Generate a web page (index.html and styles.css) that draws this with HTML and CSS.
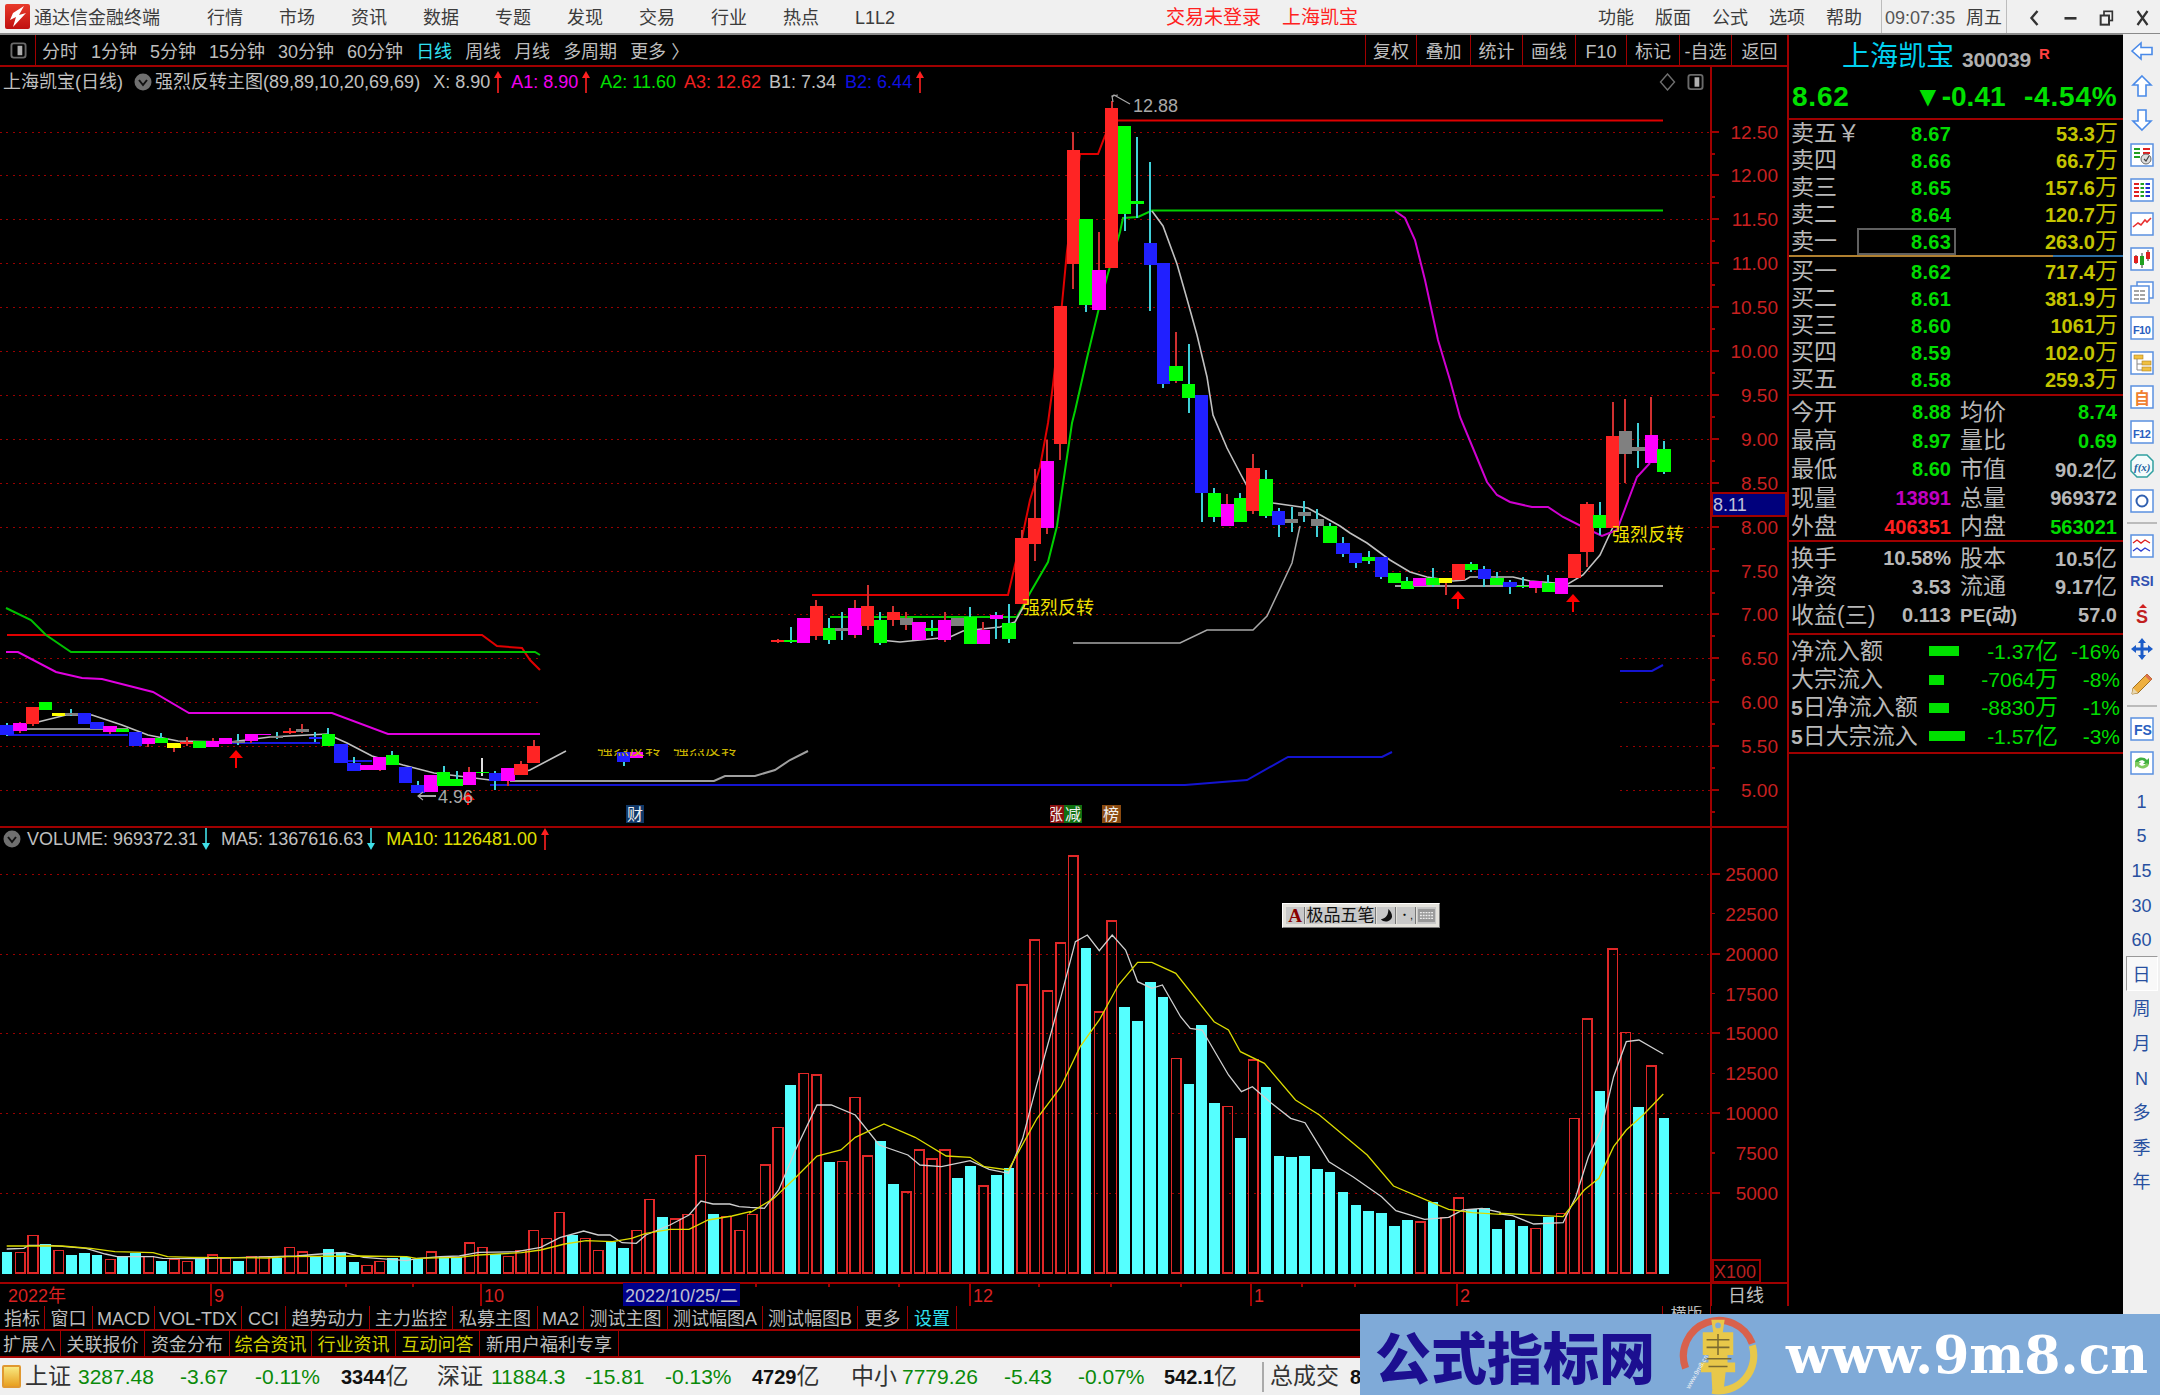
FILE: index.html
```html
<!DOCTYPE html>
<html lang="zh-CN">
<head>
<meta charset="utf-8">
<title>通达信金融终端</title>
<link rel="stylesheet" href="styles.css">
</head>
<body>
<div class="app">
  <header class="titlebar">
    <svg class="logo" viewBox="0 0 25 25"><defs><linearGradient id="lg" x1="0" y1="0" x2="0" y2="1"><stop offset="0" stop-color="#e83a2a"/><stop offset="1" stop-color="#c01010"/></linearGradient></defs><rect width="25" height="25" rx="2" fill="url(#lg)"/><path d="M19 2 L8 9 L5 16 L11 13 L8 23 L21 9 L14 11 Z" fill="#fff"/></svg>
    <span class="brand">通达信金融终端</span>
    <nav class="menu">
      <span>行情</span><span>市场</span><span>资讯</span><span>数据</span><span>专题</span><span>发现</span><span>交易</span><span>行业</span><span>热点</span><span>L1L2</span>
    </nav>
    <div class="notice"><span>交易未登录</span><span>上海凯宝</span></div>
    <nav class="menu-right"><span>功能</span><span>版面</span><span>公式</span><span>选项</span><span>帮助</span></nav>
    <div class="clock"><span class="time">09:07:35</span><span>周五</span></div>
    <div class="winctl">
      <svg viewBox="0 0 14 20"><path d="M10 3 L4 10 L10 17" fill="none" stroke="#333" stroke-width="2.4"/></svg>
      <svg viewBox="0 0 14 20"><rect x="1" y="9" width="12" height="2.6" fill="#333"/></svg>
      <svg viewBox="0 0 18 20"><rect x="6" y="2" width="10" height="11" fill="none" stroke="#333" stroke-width="2"/><rect x="2" y="7" width="10" height="11" fill="#f0f0f0" stroke="#333" stroke-width="2.4"/></svg>
      <svg viewBox="0 0 14 20"><path d="M2 3 L12 17 M12 3 L2 17" stroke="#333" stroke-width="2.2"/></svg>
    </div>
  </header>

  <div class="workspace">
    <div class="chart-col">
      <div class="toolbar">
        <div class="tool-toggle"><svg viewBox="0 0 18 18"><rect x="1.5" y="1.5" width="15" height="15" rx="2.5" fill="none" stroke="#6a6a6a" stroke-width="2"/><rect x="8" y="4" width="5" height="10" fill="#b0b0b0"/></svg></div>
        <div class="periods">
          <span>分时</span><span>1分钟</span><span>5分钟</span><span>15分钟</span><span>30分钟</span><span>60分钟</span><span class="on">日线</span><span>周线</span><span>月线</span><span>多周期</span><span>更多 〉</span>
        </div>
        <div class="tools">
          <span>复权</span><span>叠加</span><span>统计</span><span>画线</span><span>F10</span><span>标记</span><span>-自选</span><span>返回</span>
        </div>
      </div>

      <div class="chart-wrap">
        <svg id="chart" class="chart" viewBox="0 67 1787 1239" xmlns="http://www.w3.org/2000/svg"></svg>

        <div class="legend legend-main">
          <span class="l-name">上海凯宝(日线)</span>
          <svg class="chev" viewBox="0 0 18 18"><circle cx="9" cy="9" r="8.5" fill="#707070"/><path d="M5 7 L9 12 L13 7" fill="none" stroke="#111" stroke-width="2"/></svg>
          <span class="l-formula">强烈反转主图(89,89,10,20,69,69)</span>
          <span class="l-x">X: 8.90</span>
          <svg class="mark" viewBox="0 0 10 22"><path d="M5 22 V4" stroke="#ff2020" stroke-width="1.6"/><path d="M1 7 L5 0 L9 7 Z" fill="#ff2020"/></svg>
          <span class="c-mag l-a1">A1: 8.90</span>
          <svg class="mark" viewBox="0 0 10 22"><path d="M5 22 V4" stroke="#ff2020" stroke-width="1.6"/><path d="M1 7 L5 0 L9 7 Z" fill="#ff2020"/></svg>
          <span class="c-grn l-a2">A2: 11.60</span>
          <span class="c-red">A3: 12.62</span>
          <span class="c-gry">B1: 7.34</span>
          <span class="c-blu">B2: 6.44</span>
          <svg class="mark" viewBox="0 0 10 22"><path d="M5 22 V4" stroke="#ff2020" stroke-width="1.6"/><path d="M1 7 L5 0 L9 7 Z" fill="#ff2020"/></svg>
        </div>
        <div class="legend-tools">
          <svg viewBox="0 0 16 18"><path d="M8 1 L15 9 L8 17 L1 9 Z" fill="none" stroke="#707070" stroke-width="1.4"/></svg>
          <svg viewBox="0 0 18 18"><rect x="1.5" y="1.5" width="15" height="15" rx="2.5" fill="none" stroke="#6a6a6a" stroke-width="2"/><rect x="8" y="4" width="5" height="10" fill="#b0b0b0"/></svg>
        </div>

        <div class="legend legend-vol">
          <svg class="chev" viewBox="0 0 18 18"><circle cx="9" cy="9" r="8.5" fill="#707070"/><path d="M5 7 L9 12 L13 7" fill="none" stroke="#111" stroke-width="2"/></svg>
          <span class="c-gry">VOLUME: 969372.31</span>
          <svg class="mark" viewBox="0 0 10 22"><path d="M5 0 V18" stroke="#40e0e8" stroke-width="1.6"/><path d="M1 15 L5 22 L9 15 Z" fill="#40e0e8"/></svg>
          <span class="c-gry">MA5: 1367616.63</span>
          <svg class="mark" viewBox="0 0 10 22"><path d="M5 0 V18" stroke="#40e0e8" stroke-width="1.6"/><path d="M1 15 L5 22 L9 15 Z" fill="#40e0e8"/></svg>
          <span class="c-yel">MA10: 1126481.00</span>
          <svg class="mark" viewBox="0 0 10 22"><path d="M5 22 V4" stroke="#ff2020" stroke-width="1.6"/><path d="M1 7 L5 0 L9 7 Z" fill="#ff2020"/></svg>
        </div>

        <div class="ime">
          <span class="ime-a">A</span><span class="ime-name">极品五笔</span>
          <span class="ime-btn"><svg viewBox="0 0 14 16"><path d="M9 1 C9 7 7 11 1 12 C4 16 12 15 13 9 C13 6 11 3 9 1Z" fill="#111"/></svg></span>
          <span class="ime-btn ime-dots">・,</span>
          <span class="ime-btn ime-kbd"><svg viewBox="0 0 18 16"><rect x="0" y="1" width="18" height="14" fill="#999"/><path d="M2 5 H16 M2 8 H16 M2 11 H16" stroke="#eee" stroke-width="1.4" stroke-dasharray="2 1"/></svg></span>
        </div>
      </div>

      <div class="tabs tabs-a">
        <span>指标</span><span>窗口</span><span>MACD</span><span>VOL-TDX</span><span>CCI</span><span>趋势动力</span><span>主力监控</span><span>私募主图</span><span>MA2</span><span>测试主图</span><span>测试幅图A</span><span>测试幅图B</span><span>更多</span><span class="t-cyan">设置</span><i class="tab-fill"></i><span class="t-clip">横版</span>
      </div>
      <div class="tabs tabs-b">
        <span>扩展∧</span><span>关联报价</span><span>资金分布</span><span class="t-yel">综合资讯</span><span class="t-yel">行业资讯</span><span class="t-yel">互动问答</span><span>新用户福利专享</span>
      </div>
    </div>

    <section class="quote">
      <div class="q-name"><span class="q-title">上海凯宝</span><span class="q-code">300039</span><sup class="q-r">R</sup></div>
      <div class="q-price"><span class="q-now">8.62</span><span class="q-chg">▼-0.41</span><span class="q-pct">-4.54%</span></div>

      <div class="book book-sell">
        <div class="book-row"><b>卖五￥</b><em>8.67</em><u>53.3<i>万</i></u></div>
        <div class="book-row"><b>卖四</b><em>8.66</em><u>66.7<i>万</i></u></div>
        <div class="book-row"><b>卖三</b><em>8.65</em><u>157.6<i>万</i></u></div>
        <div class="book-row"><b>卖二</b><em>8.64</em><u>120.7<i>万</i></u></div>
        <div class="book-row"><b>卖一</b><em class="boxed">8.63</em><u>263.0<i>万</i></u></div>
      </div>
      <div class="book book-buy">
        <div class="book-row"><b>买一</b><em>8.62</em><u>717.4<i>万</i></u></div>
        <div class="book-row"><b>买二</b><em>8.61</em><u>381.9<i>万</i></u></div>
        <div class="book-row"><b>买三</b><em>8.60</em><u>1061<i>万</i></u></div>
        <div class="book-row"><b>买四</b><em>8.59</em><u>102.0<i>万</i></u></div>
        <div class="book-row"><b>买五</b><em>8.58</em><u>259.3<i>万</i></u></div>
      </div>

      <div class="stats stats-a">
        <div class="stat"><b>今开</b><em class="v-g">8.88</em><b>均价</b><em class="v-g">8.74</em></div>
        <div class="stat"><b>最高</b><em class="v-g">8.97</em><b>量比</b><em class="v-g">0.69</em></div>
        <div class="stat"><b>最低</b><em class="v-g">8.60</em><b>市值</b><em>90.2<i>亿</i></em></div>
        <div class="stat"><b>现量</b><em class="v-m">13891</em><b>总量</b><em>969372</em></div>
        <div class="stat"><b>外盘</b><em class="v-r">406351</em><b>内盘</b><em class="v-g">563021</em></div>
      </div>
      <div class="stats stats-b">
        <div class="stat"><b>换手</b><em>10.58%</em><b>股本</b><em>10.5<i>亿</i></em></div>
        <div class="stat"><b>净资</b><em>3.53</em><b>流通</b><em>9.17<i>亿</i></em></div>
        <div class="stat"><b>收益(三)</b><em>0.113</em><b class="pe">PE(动)</b><em>57.0</em></div>
      </div>
      <div class="funds">
        <div class="fund"><b>净流入额</b><span class="bar bar-30"></span><em>-1.37<i>亿</i></em><em>-16%</em></div>
        <div class="fund"><b>大宗流入</b><span class="bar bar-15"></span><em>-7064<i>万</i></em><em>-8%</em></div>
        <div class="fund"><b><strong>5</strong>日净流入额</b><span class="bar bar-20"></span><em>-8830<i>万</i></em><em>-1%</em></div>
        <div class="fund"><b><strong>5</strong>日大宗流入</b><span class="bar bar-36"></span><em>-1.57<i>亿</i></em><em>-3%</em></div>
      </div>
    </section>

    <aside class="sidebar">
      <div class="ico"><svg viewBox="0 0 24 24"><path d="M2 12 L11 4 V8.5 H22 V15.5 H11 V20 Z" fill="#fff" stroke="#4a8ae8" stroke-width="1.6"/></svg></div>
      <div class="ico"><svg viewBox="0 0 24 24"><path d="M12 2 L21 11 H16 V22 H8 V11 H3 Z" fill="#fff" stroke="#4a8ae8" stroke-width="1.6"/></svg></div>
      <div class="ico"><svg viewBox="0 0 24 24"><path d="M12 22 L21 13 H16 V2 H8 V13 H3 Z" fill="#fff" stroke="#4a8ae8" stroke-width="1.6"/></svg></div>
      <div class="ico"><svg viewBox="0 0 24 24"><rect x="1" y="1" width="22" height="22" fill="#fff" stroke="#5a90e0" stroke-width="1.5"/><path d="M4 6 H10 M4 10 H10 M4 14 H10" stroke="#20a020" stroke-width="2"/><path d="M13 6 H20 M13 10 H20" stroke="#e02020" stroke-width="2"/><circle cx="16" cy="16" r="5" fill="#ddd" stroke="#666"/><path d="M14 16 L16 18 L19 13" fill="none" stroke="#444" stroke-width="1.2"/></svg></div>
      <div class="ico"><svg viewBox="0 0 24 24"><rect x="1" y="1" width="22" height="22" fill="#fff" stroke="#5a90e0" stroke-width="1.5"/><path d="M4 6 H9 M4 10 H9 M4 14 H9 M4 18 H9" stroke="#e02020" stroke-width="2"/><path d="M10.5 6 H14 M10.5 10 H14 M10.5 14 H14 M10.5 18 H14" stroke="#20a020" stroke-width="2"/><path d="M15.5 6 H20 M15.5 10 H20 M15.5 14 H20 M15.5 18 H20" stroke="#2030d0" stroke-width="2"/></svg></div>
      <div class="ico"><svg viewBox="0 0 24 24"><rect x="1" y="1" width="22" height="22" fill="#fff" stroke="#5a90e0" stroke-width="1.5"/><path d="M3 15 L8 11 L11 13 L15 8 L17 10 L21 6" fill="none" stroke="#e83030" stroke-width="1.6"/></svg></div>
      <div class="ico"><svg viewBox="0 0 24 24"><rect x="1" y="1" width="22" height="22" fill="#fff" stroke="#5a90e0" stroke-width="1.5"/><path d="M6 8 V17 M12 6 V21 M18 3 V14" stroke="#333" stroke-width="1"/><rect x="4" y="9" width="4" height="7" fill="#e02020"/><rect x="10" y="9" width="4" height="9" fill="#20a020"/><rect x="16" y="5" width="4" height="7" fill="#e02020"/></svg></div>
      <div class="ico"><svg viewBox="0 0 24 24"><rect x="7" y="1" width="16" height="16" fill="#fff" stroke="#5a90e0" stroke-width="1.5"/><rect x="1" y="5" width="18" height="17" fill="#fff" stroke="#5a90e0" stroke-width="1.5"/><path d="M4 10 H16 M4 14 H16 M4 18 H16" stroke="#888" stroke-width="1.6" stroke-dasharray="5 1"/></svg></div>
      <div class="ico"><svg viewBox="0 0 24 24"><rect x="1" y="1" width="22" height="22" fill="#fff" stroke="#5a90e0" stroke-width="1.5"/><text x="3" y="18" class="ico-t">F10</text></svg></div>
      <div class="ico"><svg viewBox="0 0 24 24"><rect x="1" y="1" width="22" height="22" fill="#fff" stroke="#5a90e0" stroke-width="1.5"/><path d="M7 8 V19 H12 M7 13 H12" fill="none" stroke="#888"/><rect x="4" y="4" width="9" height="4" fill="#f0c040" stroke="#b08020" stroke-width=".6"/><rect x="12" y="10" width="9" height="4" fill="#f0c040" stroke="#b08020" stroke-width=".6"/><rect x="12" y="16" width="9" height="4" fill="#f0c040" stroke="#b08020" stroke-width=".6"/></svg></div>
      <div class="ico"><svg viewBox="0 0 24 24"><rect x="1" y="1" width="22" height="22" fill="#fff" stroke="#5a90e0" stroke-width="1.5"/><text x="12" y="18.5" text-anchor="middle" class="ico-z">自</text></svg></div>
      <div class="ico"><svg viewBox="0 0 24 24"><rect x="1" y="1" width="22" height="22" fill="#fff" stroke="#5a90e0" stroke-width="1.5"/><text x="3" y="18" class="ico-t">F12</text></svg></div>
      <div class="ico"><svg viewBox="0 0 24 24"><path d="M7 1 H17 L23 7 V17 L17 23 H7 L1 17 V7 Z" fill="#f4fbfb" stroke="#30a0a0" stroke-width="1.5"/><text x="4" y="17" class="ico-f">f(x)</text></svg></div>
      <div class="ico"><svg viewBox="0 0 24 24"><rect x="1" y="1" width="22" height="22" fill="#fff" stroke="#5a90e0" stroke-width="1.5"/><circle cx="12" cy="12" r="5.5" fill="none" stroke="#3060b0" stroke-width="2"/></svg></div>
      <div class="ico-sep"></div>
      <div class="ico"><svg viewBox="0 0 24 24"><rect x="1" y="1" width="22" height="22" fill="#fff" stroke="#5a90e0" stroke-width="1.5"/><path d="M3 9 L7 6 L11 9 L15 6 L20 9" fill="none" stroke="#e02020" stroke-width="1.4"/><path d="M3 17 L7 14 L11 17 L15 14 L20 17" fill="none" stroke="#3040d0" stroke-width="1.4"/></svg></div>
      <div class="ico"><svg viewBox="0 0 24 24"><text x="12" y="18" text-anchor="middle" class="ico-rsi">RSI</text></svg></div>
      <div class="ico"><svg viewBox="0 0 24 24"><path d="M13 1 L17 5 H9 Z" fill="#d02020"/><text x="12" y="20" text-anchor="middle" class="ico-s">S</text></svg></div>
      <div class="ico"><svg viewBox="0 0 24 24"><path d="M12 1 L16 6 H13.5 V10.5 H18 V8 L23 12 L18 16 V13.5 H13.5 V18 H16 L12 23 L8 18 H10.5 V13.5 H6 V16 L1 12 L6 8 V10.5 H10.5 V6 H8 Z" fill="#1c5cc8"/></svg></div>
      <div class="ico"><svg viewBox="0 0 24 24"><path d="M17 2 L22 7 L8 21 L2 22 L3 16 Z" fill="#eeb040" stroke="#a07020" stroke-width="1"/><path d="M3 16 L8 21 L2 22 Z" fill="#e8d8b0"/><path d="M17 2 L22 7 L20 9 L15 4 Z" fill="#e07050"/></svg></div>
      <div class="ico-sep"></div>
      <div class="ico"><svg viewBox="0 0 24 24"><rect x="1" y="1" width="22" height="22" fill="#fff" stroke="#5a90e0" stroke-width="1.5"/><text x="4" y="18" class="ico-t2">FS</text></svg></div>
      <div class="ico"><svg viewBox="0 0 24 24"><rect x="1" y="1" width="22" height="22" fill="#fff" stroke="#5a90e0" stroke-width="1.5"/><path d="M5 11 C6 6 14 5 17 9 L19 7 V13 H13 L15 11 C13 8 9 9 8 12 Z" fill="#40b040"/><path d="M19 13 C18 18 10 19 7 15 L5 17 V11 H11 L9 13 C11 16 15 15 16 12 Z" fill="#80cc60"/></svg></div>
      <div class="per per-first">1</div><div class="per">5</div><div class="per">15</div><div class="per">30</div><div class="per">60</div>
      <div class="per per-on">日</div><div class="per">周</div><div class="per">月</div><div class="per">N</div><div class="per">多</div><div class="per">季</div><div class="per">年</div>
    </aside>
  </div>

  <footer class="statusbar">
    <i class="s-ico"></i>
    <span class="s-cn">上证</span><span class="s-g">3287.48</span><span class="s-g">-3.67</span><span class="s-g">-0.11%</span><span class="s-k">3344<i>亿</i></span>
    <span class="s-cn">深证</span><span class="s-g">11884.3</span><span class="s-g">-15.81</span><span class="s-g">-0.13%</span><span class="s-k">4729<i>亿</i></span>
    <span class="s-cn">中小</span><span class="s-g">7779.26</span><span class="s-g">-5.43</span><span class="s-g">-0.07%</span><span class="s-k">542.1<i>亿</i></span>
    <i class="s-div"></i><span class="s-cn">总成交</span><span class="s-k">8074<i>亿</i></span>
  </footer>

  <div class="watermark">
    <span class="wm-cn">公式指标网</span>
    <svg class="wm-logo" viewBox="0 0 84 84">
      <path id="wmarc" d="M8 56 A37 37 0 1 1 78 30" fill="none" stroke="#d8614c" stroke-width="7.5"/>
      <path d="M78 32 A37 37 0 0 1 36 79" fill="none" stroke="#e8c84a" stroke-width="7.5"/>
      <path d="M35 5 H49 L47 18 H58 V42 H52 V50 H60 V60 H50 L48 78 H36 L35 60 H24 V50 H32 V42 H26 V18 H37 Z" fill="#e8c84a"/>
      <circle cx="42" cy="11" r="3" fill="#7faad8"/>
      <path d="M30 26 H54 M30 34 H54 M42 20 V42 M28 46 H56 M32 54 H52" stroke="#7a6a30" stroke-width="1.6"/>
      <text class="wm-mini" transform="translate(12 78) rotate(-60)">www.9m8.cn</text>
    </svg>
    <span class="wm-url">www.9m8.cn</span>
  </div>
</div>
<script src="chart.js"></script>
</body>
</html>
```

FILE: styles.css
```css
* { box-sizing: border-box; }
html, body { margin: 0; padding: 0; background: #000; }
body { font-family: "Liberation Sans", "Noto Sans CJK SC", sans-serif; }
.app { position: relative; width: 2160px; height: 1395px; overflow: hidden; display: flex; flex-direction: column; background: #000; color: #c0c0c0; }
i, em, u, b { font-style: normal; text-decoration: none; font-weight: normal; }

/* title bar */
.titlebar { height: 35px; flex: none; display: flex; align-items: center; background: #f0f0f0; border-bottom: 2px solid #8a8a8a; color: #3c3c3c; font-size: 18px; line-height: 1; white-space: nowrap; }
.titlebar > span, .titlebar > nav, .titlebar > div { padding-top: 2px; }
.logo { width: 25px; height: 25px; margin-left: 5px; flex: none; }
.brand { margin-left: 4px; width: 126px; }
.menu { display: flex; gap: 36px; margin-left: 47px; }
.notice { display: flex; gap: 21px; margin-left: 271px; color: #ff2020; font-size: 19px; }
.menu-right { display: flex; gap: 21px; margin-left: 240px; }
.clock { display: flex; align-items: center; gap: 9px; height: 33px; margin-left: 19px; padding: 0 4px 0 3px; border-left: 1px solid #bcbcbc; border-right: 1px solid #bcbcbc; }
.time { width: 72px; color: #555; font-size: 18px; }
.winctl { display: flex; align-items: center; gap: 21px; margin-left: 20px; }
.winctl svg { height: 20px; width: 15px; }

/* workspace */
.workspace { flex: 1; display: flex; min-height: 0; }
.chart-col { width: 1789px; flex: none; display: flex; flex-direction: column; }

/* toolbar */
.toolbar { height: 32px; flex: none; display: flex; align-items: stretch; border-bottom: 2px solid #a00000; font-size: 18px; line-height: 1; white-space: nowrap; color: #bdbdbd; }
.tool-toggle { width: 36px; flex: none; display: flex; align-items: center; justify-content: center; border-right: 1px solid #a00000; padding-left: 1px; }
.tool-toggle svg { width: 17px; height: 17px; }
.periods { display: flex; align-items: center; gap: 13px; margin-left: 6px; padding-top: 3px; }
.periods .on { color: #30e0f0; }
.tools { margin-left: auto; width: 424px; display: grid; grid-template-columns: 51px 54px 52px 53px 51px 53px 52px 58px; }
.tools span { display: flex; align-items: center; justify-content: center; border-left: 1px solid #a00000; padding-top: 3px; }
.tools span:last-child { border-right: 2px solid #a00000; }

/* chart */
.chart-wrap { position: relative; height: 1239px; flex: none; }
.chart { display: block; width: 1787px; height: 1239px; background: #000; }
.chart-wrap::after { content: ""; position: absolute; left: 1787px; top: 0; bottom: 0; width: 2px; background: #a00000; }
.chart text { font-family: "Liberation Sans", "Noto Sans CJK SC", sans-serif; }
.legend { position: absolute; display: flex; align-items: center; height: 24px; font-size: 18px; line-height: 1; white-space: nowrap; color: #c0c0c0; }
.legend-main { left: 3px; top: 3px; }
.legend-vol { left: 3px; top: 760px; }
.chev { width: 18px; height: 18px; flex: none; }
.mark { width: 10px; height: 22px; flex: none; }
.l-name { margin-right: 11px; }
.l-formula { margin-left: 3px; margin-right: 13px; }
.legend-main .mark { margin: 0 3px; }
.l-a1 { margin-left: 5px; }
.l-a2 { margin-left: 6px; margin-right: 8px; }
.legend-main .c-red { margin-right: 8px; }
.legend-main .c-gry { margin-right: 9px; }
.legend-vol .chev + .c-gry { margin-left: 6px; }
.legend-vol .mark { margin: 0 4px 0 3px; }
.legend-vol .mark + .c-gry, .legend-vol .mark + .c-yel { margin-left: 6px; }
.c-mag { color: #f000f0; } .c-grn { color: #00e000; } .c-red { color: #f02020; }
.c-gry { color: #c0c0c0; } .c-blu { color: #1010e0; } .c-yel { color: #e0e000; }
.legend-tools { position: absolute; left: 1659px; top: 6px; display: flex; gap: 11px; }
.legend-tools svg { width: 17px; height: 18px; }
.ime { position: absolute; left: 1282px; top: 836px; width: 158px; height: 25px; display: flex; align-items: stretch; padding: 3px; gap: 1px; background: #e4e2dc; border: 1px solid; border-color: #fff #777 #777 #fff; font-size: 17px; line-height: 1; color: #111; white-space: nowrap; }
.ime span { display: flex; align-items: center; justify-content: center; background: #c8c8c8; border-right: 1px solid #777; flex: none; }
.ime-a { width: 19px; color: #8a0000; font-weight: bold; font-family: "Liberation Serif", serif; font-size: 19px; }
.ime-name { width: 70px; }
.ime-btn { width: 19px; }
.ime-btn svg { width: 13px; height: 15px; }
.ime-dots { font-size: 11px; }
.ime .ime-kbd { flex: 1; border-right: none; }
.ime-kbd svg { width: 17px; }

/* bottom tabs */
.tabs { flex: none; display: grid; align-items: stretch; font-size: 18px; line-height: 1; white-space: nowrap; color: #bdbdbd; border-bottom: 2px solid #a00000; }
.tabs span { display: flex; align-items: center; justify-content: center; border-right: 1px solid #a00000; overflow: hidden; padding-top: 2px; }
.tabs-a { height: 25px; grid-template-columns: 45px 48px 62px 87px 44px 84px 83px 85px 46px 84px 95px 95px 50px 49px 706px 48px; }
.tabs-b { height: 27px; width: 1789px; grid-template-columns: 61px 84px 85px 82px 84px 84px 139px; }
.tab-fill { border-right: 1px solid #a00000; }
.t-cyan { color: #30e0f0; }
.t-yel { color: #d0d000; }
.tabs .t-clip { align-items: flex-start; font-size: 16px; padding-top: 0; }

/* quote panel */
.quote { width: 334px; flex: none; display: flex; flex-direction: column; line-height: 1; white-space: nowrap; }
.q-name { height: 40px; display: flex; align-items: center; padding: 3px 0 0 53px; }
.q-title { font-size: 28px; color: #00d0f0; }
.q-code { margin-left: 8px; font-size: 21px; color: #b0b0b0; font-weight: bold; letter-spacing: -.2px; padding-top: 5px; }
.q-r { margin: 0 0 0 8px; align-self: flex-start; padding-top: 8px; font-size: 15px; color: #ff4040; font-weight: bold; }
.q-price { height: 45px; display: flex; align-items: center; color: #00e000; font-size: 28px; font-weight: bold; border-bottom: 2px solid #a00000; padding-top: 1px; }
.q-now { margin-left: 3px; width: 122px; letter-spacing: .8px; }
.q-chg { width: 110px; }
.q-pct { letter-spacing: .8px; }
.book { display: flex; flex-direction: column; }
.book-sell { height: 137px; border-bottom: 2px solid; border-image: linear-gradient(to right, #b08030 263px, #2c6fa8 263px) 1; }
.book-buy { height: 139px; padding-top: 1px; border-bottom: 2px solid #a00000; }
.book-row { height: 27.1px; flex: none; display: grid; grid-template-columns: 66px 99px 1fr; align-items: center; padding: 0 5px 0 2px; }
.book-row b { font-size: 23px; color: #b8b8b8; }
.book-row em { height: 100%; display: flex; align-items: center; padding-left: 52px; font-size: 20px; font-weight: bold; letter-spacing: .3px; color: #00dc00; border: 2px solid transparent; }
.book-row em.boxed { border-color: #606060; }
.book-row u { text-align: right; font-size: 20px; font-weight: bold; color: #c4c400; }
.book-row u i { font-size: 23px; font-weight: normal; }
.stats { display: flex; flex-direction: column; border-bottom: 2px solid #a00000; }
.stats-a { height: 146px; padding-top: 1px; }
.stats-b { height: 93px; padding-top: 1px; }
.stat { height: 28.6px; flex: none; display: grid; grid-template-columns: 79px 81px 9px 70px 87px; align-items: center; padding: 2px 0 0 2px; }
.stat b:nth-child(3) { grid-column: 4; }
.stat b { font-size: 23px; color: #b8b8b8; }
.stat em { text-align: right; font-size: 20px; font-weight: bold; color: #b8b8b8; }
.stat em i { font-size: 23px; font-weight: normal; }
.stat .pe { font-size: 19px; font-weight: bold; }
.stat em.v-g { color: #00dc00; } .stat em.v-m { color: #c000c0; } .stat em.v-r { color: #ff2020; }
.funds { height: 119px; padding-top: 2px; border-bottom: 2px solid #a00000; }
.fund { height: 28.4px; display: grid; grid-template-columns: 138px 50px 79px 62px; align-items: center; padding-left: 2px; color: #00dc00; font-size: 21px; }
.fund b { font-size: 23px; color: #b8b8b8; }
.fund b strong { font-size: 21px; font-weight: bold; }
.fund em { text-align: right; }
.fund em i { font-size: 23px; }
.bar { height: 10px; background: #00e000; }
.bar-30 { width: 30px; } .bar-15 { width: 15px; } .bar-20 { width: 20px; } .bar-36 { width: 36px; }

/* sidebar */
.sidebar { flex: 1; min-width: 0; background: #f0f0f0; display: flex; flex-direction: column; align-items: center; font-size: 18px; line-height: 1; color: #2850a0; margin-top: -1px; }
.ico { width: 100%; height: 34.6px; flex: none; display: flex; align-items: center; justify-content: center; }
.ico svg { width: 24px; height: 24px; }
.ico-sep { width: 30px; height: 10px; flex: none; background: linear-gradient(#bbb, #bbb) center / 100% 2px no-repeat; }
.ico-t { font: bold 11px "Liberation Sans", sans-serif; fill: #2a60c0; letter-spacing: -.6px; }
.ico-t2 { font: bold 14px "Liberation Sans", sans-serif; fill: #2a60c0; }
.ico-z { font: bold 16px "Noto Sans CJK SC", sans-serif; fill: #f08030; }
.ico-f { font: italic bold 11px "Liberation Serif", serif; fill: #2060a0; }
.ico-rsi { font: bold 14px "Liberation Sans", sans-serif; fill: #3050b0; }
.ico-s { font: bold 18px "Liberation Sans", sans-serif; fill: #c02020; }
.per { width: 100%; height: 34.6px; flex: none; display: flex; align-items: center; justify-content: center; padding-top: 2px; }
.per-first { margin-top: 3px; }
.per-on { background: #f8f8f8; border: 1px solid; border-color: #999 #fff #fff #999; width: 32px; }

/* status bar */
.statusbar { height: 37px; flex: none; display: grid; grid-template-columns: 25px 53px 102px 75px 86px 96px 54px 94px 80px 87px 99px 51px 102px 74px 86px 98px 8px 80px 1fr; align-items: center; background: #f0f0f0; line-height: 1; white-space: nowrap; }
.s-ico { width: 19px; height: 23px; margin-left: 2px; background: linear-gradient(#f8e880, #e8a020); border: 2px solid #e09830; border-radius: 2px; }
.s-cn { font-size: 23px; color: #333; }
.s-g { font-size: 21px; color: #0a8a0a; }
.s-k { font-size: 20px; color: #111; font-weight: bold; }
.s-k i { font-size: 23px; font-weight: normal; color: #333; }
.s-div { width: 2px; height: 30px; background: #aaa; }

/* watermark */
.watermark { position: absolute; left: 1360px; top: 1314px; width: 800px; height: 81px; display: flex; align-items: center; background: #7faad8; white-space: nowrap; line-height: 1; }
.wm-cn { margin-left: 15px; font-family: "Noto Sans CJK SC", sans-serif; font-weight: 900; font-size: 56px; color: #1c0f90; }
.wm-logo { width: 84px; height: 80px; margin-left: 21px; flex: none; }
.wm-mini { font: 7px "Liberation Sans", sans-serif; fill: #f4f4f4; }
.wm-url { margin-left: 26px; font-family: "DejaVu Serif", serif; font-weight: bold; font-size: 52px; color: #fff; }
```

FILE: chart.js
```javascript
(function () {
  var svg = document.getElementById('chart');
  var out = [];
  var X = function (i) { return 7 + 12.845 * i; };
  var DR = '#a00000';

  function line(pts, color, w) {
    out.push('<polyline fill="none" stroke="' + color + '" stroke-width="' + (w || 1.5) + '" points="' +
      pts.map(function (p) { return p[0] + ',' + p[1]; }).join(' ') + '"/>');
  }
  function hv(x1, y1, x2, y2, color, w, dash) {
    out.push('<line shape-rendering="crispEdges" x1="' + x1 + '" y1="' + y1 + '" x2="' + x2 + '" y2="' + y2 + '" stroke="' + color + '" stroke-width="' + (w || 1) + '"' + (dash ? ' stroke-dasharray="' + dash + '"' : '') + '/>');
  }
  function rect(x, y, w, h, fill, extra) {
    out.push('<rect shape-rendering="crispEdges" x="' + x + '" y="' + y + '" width="' + w + '" height="' + h + '" fill="' + fill + '" ' + (extra || '') + '/>');
  }
  function text(x, y, s, color, size, anchor, extra) {
    out.push('<text x="' + x + '" y="' + y + '" fill="' + color + '" font-size="' + size + '"' + (anchor ? ' text-anchor="' + anchor + '"' : '') + (extra ? ' ' + extra : '') + '>' + s + '</text>');
  }
  function arrow(x, y1, y2, color) {
    hv(x, y1 + 6, x, y2, color, 2);
    out.push('<polygon fill="' + color + '" points="' + (x - 7) + ',' + (y1 + 8) + ' ' + x + ',' + y1 + ' ' + (x + 7) + ',' + (y1 + 8) + '"/>');
  }

  /* ---- grid and axes ---- */
  var i, y;
  var DOT = '2 4.3', DOTC = '#9a0000';
  for (i = 0; i <= 15; i++) {
    var p = 5 + i * 0.5;
    y = Math.round(790 - (p - 5) * 87.8);
    var full = p >= 7 ? [[0, 1711]] : [[0, 540], [1620, 1711]];
    full.forEach(function (r) { hv(r[0], y, r[1], y, DOTC, 1, DOT); });
    hv(1711, y, 1719, y, DR, 2);
    hv(1711, y + 22, 1715, y + 22, DR, 1.5);
    text(1778, y + 7, p.toFixed(2), '#c82020', 19, 'end');
  }
  [5000, 10000, 15000, 20000, 25000].forEach(function (v) {
    y = Math.round(1273 - v * 0.01597);
    hv(0, y, 1711, y, DOTC, 1, DOT);
  });
  for (i = 2; i <= 10; i++) {
    var v = i * 2500;
    y = 1273 - v * 0.01597;
    hv(1711, y, i % 2 ? 1715 : 1720, y, DR, i % 2 ? 1.5 : 2);
    text(1778, y + 7, String(v), '#c82020', 19, 'end');
  }

  /* ---- main overlays ---- */
  line([[7, 635], [482, 635], [497, 646], [522, 648], [530, 660], [540, 670]], '#e00000', 2);
  line([[6, 608], [31, 620], [46, 635], [71, 652], [523, 652], [535, 652], [540, 655]], '#00c000', 2);
  line([[6, 652], [18, 652], [56, 672], [82, 678], [102, 679], [153, 692], [189, 713], [332, 713], [388, 734], [540, 734]], '#e000e0', 2);
  line([[15, 729], [128, 729]], '#909090', 2);
  line([[38, 722], [66, 715], [92, 715], [122, 725], [148, 735], [178, 741], [230, 742], [270, 737], [327, 734], [347, 743], [372, 756], [403, 765], [434, 773], [490, 780], [530, 770], [566, 751]], '#c0c0c0', 1.6);
  line([[7, 735], [128, 735]], '#1818e0', 2);
  line([[227, 743], [320, 743]], '#1818e0', 2);
  line([[345, 761], [372, 761]], '#1818e0', 2);
  line([[490, 785], [1185, 785], [1247, 780], [1288, 757], [1382, 757], [1392, 752]], '#1414d0', 2);
  line([[1620, 671], [1652, 671], [1663, 665]], '#1414d0', 2);
  line([[510, 781], [714, 781], [725, 776], [755, 776], [775, 770], [790, 760], [808, 751]], '#a0a0a0', 2);

  /* spike lines */
  line([[812, 595], [1008, 595], [1015, 565], [1022, 538], [1030, 500], [1040, 467], [1048, 423], [1053, 385], [1062, 304], [1067, 251], [1080, 154], [1098, 154], [1105, 136], [1112, 120.5], [1663, 120.5]], '#e00000', 2);
  line([[830, 617], [1017, 617], [1030, 593], [1048, 562], [1057, 526], [1063, 484], [1072, 423], [1075, 411], [1087, 358], [1098, 312], [1107, 277], [1120, 232], [1123, 218], [1138, 217], [1152, 210.5], [1663, 210.5]], '#00d000', 2);
  line([[1152, 211], [1163, 226], [1177, 264], [1187, 299], [1197, 335], [1207, 377], [1213, 415], [1227, 448], [1240, 473], [1247, 486], [1273, 503], [1308, 508], [1340, 526], [1350, 533], [1367, 543], [1390, 560], [1410, 572], [1427, 577], [1453, 581], [1465, 580], [1470, 577], [1513, 577], [1530, 581], [1568, 584], [1583, 575], [1600, 555], [1613, 527]], '#c0c0c0', 1.6);
  line([[880, 640], [900, 642], [950, 637], [963, 631], [1000, 627], [1015, 622], [1028, 599]], '#c0c0c0', 1.6);
  line([[1073, 643], [1180, 643], [1207, 630], [1253, 630], [1267, 616], [1292, 563], [1300, 526]], '#a8a8a8', 1.5);
  hv(1395, 586, 1663, 586, '#a0a0a0', 2);
  line([[1395, 211], [1405, 218], [1415, 240], [1425, 280], [1438, 340], [1450, 380], [1460, 417], [1475, 453], [1487, 482], [1497, 495], [1510, 502], [1532, 507], [1548, 507], [1563, 517], [1583, 527], [1602, 536], [1617, 530], [1637, 477], [1650, 463]], '#d000d0', 2);

  /* ---- candles: index, colour, body top, body bottom, wick top, wick bottom, wick colour ---- */
  var COL = { r: '#ff2424', g: '#00ff00', b: '#2020ff', m: '#ff00ff', a: '#808080', y: '#ffff00' };
  var candles = [
    [0,'b',725,735,723,736],[1,'m',723,731,722,733],[2,'r',707,724,707,726],[3,'g',702,710],
    [4,'y',713,716],[5,'a',713,715,709,716,'c'],[6,'b',713,724],[7,'b',722,729],[8,'m',726,732,726,734],
    [9,'g',729,732],[10,'b',732,746],[11,'m',738,744,738,747],[12,'g',738,743,733,743],[13,'y',743,748,743,752],
    [14,'r',742,744,737,746],[15,'g',741,748],[16,'m',741,747,738,747],[17,'m',738,744],[18,'a',741,743,734,745,'c'],
    [19,'m',734,741,734,743],[20,'m',734,735],[21,'a',736,738,732,739,'c'],[22,'r',731,733,728,734],[23,'a',729,732,724,733,'r'],
    [24,'b',737,739,732,742],[25,'g',734,746,728,746],[26,'b',744,763],[27,'b',763,771,757,771],[28,'m',765,770],
    [29,'m',757,770,757,771],[30,'g',755,765,751,765],[31,'b',767,783],[32,'b',785,793,781,793],[33,'m',775,792],
    [34,'g',772,786,766,786],[35,'g',779,786,771,786],[36,'m',772,785,767,785],[37,'g',772,773,758,776,'w'],
    [38,'b',773,781,771,790],[39,'m',768,781,768,786],[40,'r',764,775,761,775],[41,'r',746,763,740,763],
    [48,'b',752,762,752,766],[49,'m',752,758],
    [60,'r',640,642,639,643],[61,'g',640,642,627,643],[62,'m',618,643],[63,'r',606,636,600,640],[64,'g',628,640,618,644],
    [65,'a',628,631,612,640,'c'],[66,'m',608,635,600,638],[67,'r',606,626,585,630],[68,'g',620,643,612,645],[69,'r',612,620,606,626],
    [70,'a',618,625,612,630,'r'],[71,'m',622,640],[72,'g',628,631,620,636],[73,'m',620,640,612,642],[74,'a',618,626],
    [75,'g',617,644,607,644],[76,'m',630,644,622,644],[77,'m',615,619,612,639,'c'],[78,'g',623,639,604,643],
    [79,'r',538,604,530,604],[80,'r',518,544,469,561],[81,'m',461,528,440,534],[82,'r',306,444,306,460],[83,'r',150,264,132,289],
    [84,'g',219,305,219,312],[85,'m',270,310,232,310],[86,'r',108,268,101,268],[87,'g',126,214,126,231],[88,'g',201,204,137,218],
    [89,'b',243,265,162,311],[90,'b',263,384,263,388],[91,'g',366,381,332,383,'r'],[92,'g',384,398,344,413],[93,'b',395,493,395,522],
    [94,'g',493,517,488,522],[95,'m',504,526,494,526],[96,'g',498,522,493,522],[97,'r',468,511,454,514],[98,'g',479,516,470,518],
    [99,'b',511,525,508,537],[100,'a',519,523,507,532,'c'],[101,'a',512,516,501,522,'c'],[102,'a',519,526,509,537,'c'],
    [103,'g',526,543,523,543],[104,'b',543,554,537,557],[105,'b',553,563,553,568],[106,'g',557,561,551,564],[107,'b',557,577,557,579],
    [108,'g',573,583],[109,'g',581,589,577,589],[110,'m',578,586],[111,'g',578,585,568,587],[112,'y',578,583,578,595],
    [113,'r',564,580],[114,'g',564,570,562,572],[115,'b',569,579,566,587],[116,'g',578,585,572,585],[117,'b',582,587,580,594],
    [118,'g',586,587,577,588],[119,'m',581,588,581,593],[120,'g',583,592,575,592],[121,'m',578,594],[122,'r',554,578],
    [123,'r',504,552,502,567],[124,'g',515,528,502,535],[125,'r',436,528,402,528],[126,'a',431,454,399,483,'r'],
    [127,'a',447,451,423,468,'c'],[128,'m',435,463,397,463],[129,'g',449,472,441,474]
  ];
  var WICK = { c: '#40d0d8', r: '#d03030', w: '#e0e0e0' };
  candles.forEach(function (c) {
    var x = X(c[0]);
    if (c[4] !== undefined) {
      var wc = c[6] ? WICK[c[6]] : (c[1] === 'g' || c[1] === 'b' ? WICK.c : WICK.r);
      hv(Math.round(x), c[4], Math.round(x), c[5], wc, 1.5);
    }
  });
  candles.forEach(function (c) {
    rect((X(c[0]) - 6.6).toFixed(1), c[2], 13.3, c[3] - c[2], COL[c[1]]);
  });

  /* ---- marks on the main pane ---- */
  arrow(236, 750, 768, '#ff0000');
  arrow(468, 792, 805, '#ff0000');
  arrow(1458, 591, 609, '#ff0000');
  arrow(1573, 594, 612, '#ff0000');
  text(1022, 614, '强烈反转', '#f0e000', 18);
  text(1612, 541, '强烈反转', '#f0e000', 18);
  out.push('<clipPath id="fade"><rect x="590" y="749" width="160" height="7"/></clipPath>');
  out.push('<g clip-path="url(#fade)">');
  text(597, 755, '强烈反转', '#c8b400', 16);
  text(673, 755, '强烈反转', '#c8b400', 16);
  out.push('</g>');
  text(1133, 112, '12.88', '#a8a8a8', 18);
  line([[1112, 97], [1114, 95], [1130, 104]], '#a8a8a8', 1.2);
  line([[1113, 102], [1112, 96], [1118, 95]], '#a8a8a8', 1.2);
  text(438, 803, '4.96', '#a8a8a8', 18);
  hv(418, 796, 436, 796, '#a8a8a8', 1.4);
  line([[423, 792], [418, 796], [423, 800]], '#a8a8a8', 1.2);

  rect(626, 805, 18, 18, '#103868');
  text(627, 820, '财', '#f0f0f0', 16);
  rect(1050, 805, 14, 18, '#8a1010');
  rect(1064, 805, 18, 18, '#107010');
  out.push('<clipPath id="zhang"><rect x="1050" y="805" width="13" height="18"/></clipPath>');
  text(1047, 820, '涨', '#f0f0f0', 16, '', 'clip-path="url(#zhang)"');
  text(1065, 820, '减', '#f0f0f0', 16);
  rect(1102, 805, 19, 18, '#8a4a10');
  text(1103, 820, '榜', '#f0f0f0', 16);

  /* ---- volume bars: negative = red outlined up-day, positive = cyan ---- */
  var A = [755,-757,-707,732,-752,764,760,764,-779,770,760,-770,782,-778,-784,770,-765,-775,782,-770,-770,775,-743,-756,770,746,757,787,-797,-784,775,770,778,-756,770,772,-729,-743,762,-769,-752,-692,-715,-638,705,-716,-752,727,745,-692,-598,652,-657,-643,-467,642,-650,-692];
  var B = [-1243,-1095,-983,855,-820,-825,1085,-1085,-892,-1068,1022,1152,-1176,-1050,-1077,-1050,1133,1098,-1158,1125,1103,-555,-420,-573,-428,-168,445,-636,-362,621,662,545,590,-775,851,676,909,-919,1013,-780,860,1067,1071,1067,1107,1116,1175,1215,1233,1238,1278,1260,-1266,1207,-1253,-1194,1228,1225,1288];
  var C = [1260,1278,-1285,1250,-1240,-955,-658,873,-447,-698,922,-798,953];
  var tops = A.map(function (v) { return v < 0 ? -(1000 - v / 3) : 1000 + v / 3; })
    .concat(B.concat(C).map(function (v) { return v < 0 ? -(800 - v / 3) : 800 + v / 3; }));
  tops.forEach(function (t, n) {
    var x = X(n);
    var top = Math.abs(t);
    if (t < 0) {
      rect((x - 4.5).toFixed(1), top.toFixed(1), 9.5, (1273 - top).toFixed(1), 'none', 'stroke="#e02828" stroke-width="1.6"');
    } else {
      rect((x - 5.2).toFixed(1), top.toFixed(1), 10.6, (1274 - top).toFixed(1), '#55ffff');
    }
  });

  /* ---- volume moving averages ---- */
  function mapLine(list, ox, sx, oy) {
    return list.map(function (p) { return [(ox + p[0] / sx).toFixed(1), (oy + p[1] / 3).toFixed(1)]; });
  }
  var w1 = mapLine([[14,747],[50,745],[60,736],[105,736],[180,745],[220,762],[245,770],[320,770],[340,775],[420,776],[620,768],[670,762],[720,757],[760,772],[850,782],[870,776],[920,770],[960,768],[1000,757],[1080,755],[1130,742],[1170,713],[1220,693],[1250,705],[1275,705],[1300,728],[1330,730],[1350,705],[1400,675],[1440,645],[1465,603],[1490,612],[1525,612],[1545,620],[1568,622]], 0, 2.09, 1000);
  var w2 = mapLine([[0,1222],[30,1225],[60,1170],[95,1050],[140,915],[170,915],[220,945],[270,1035],[330,1065],[355,1095],[400,1100],[460,1082],[500,1108],[540,1120],[570,1015],[600,850],[650,590],[680,425],[705,405],[730,452],[757,405],[785,450],[810,545],[840,565],[862,555],[900,650],[920,685],[945,690],[1000,825],[1027,875],[1050,860],[1090,910],[1130,955],[1160,968],[1210,1085],[1260,1130],[1320,1190],[1350,1232],[1410,1258],[1460,1252],[1490,1230],[1530,1225],[1568,1237]], 750, 2.09, 800);
  var w3 = mapLine([[0,1242],[30,1247],[80,1272],[150,1268],[180,1190],[210,1070],[240,990],[270,830],[300,725],[330,720],[388,762]], 1500, 2.376, 800);
  var y1 = mapLine([[14,738],[130,738],[190,745],[240,755],[320,758],[350,770],[400,772],[560,774],[600,770],[750,768],[850,770],[870,775],[960,772],[1000,765],[1090,758],[1130,750],[1180,732],[1225,722],[1280,725],[1320,715],[1350,700],[1400,688],[1440,688],[1480,660],[1530,648],[1568,635]], 0, 2.09, 1000);
  var y2 = mapLine([[0,1238],[50,1195],[90,1140],[140,1068],[190,1050],[220,1012],[280,972],[345,1012],[410,1068],[460,1072],[490,1100],[540,1110],[600,955],[650,860],[690,740],[730,660],[770,555],[810,487],[840,487],[890,520],[970,665],[1000,690],[1025,755],[1075,790],[1140,900],[1190,945],[1290,1065],[1345,1158],[1430,1210],[1460,1228],[1510,1238],[1568,1243]], 750, 2.09, 800);
  var y3 = mapLine([[0,1240],[150,1250],[200,1170],[235,1135],[270,1040],[300,990],[340,945],[388,882]], 1500, 2.376, 800);
  line(w1.concat(w2, w3), '#d0d0d0', 1.3);
  line(y1.concat(y2, y3), '#dcdc00', 1.3);

  /* ---- frame ---- */
  hv(1711, 67, 1711, 1306, DR, 2);
  hv(0, 826.5, 1787, 826.5, DR, 2);
  hv(0, 1282.5, 1787, 1282.5, DR, 2);
  rect(1712, 493, 74, 23, '#00007c', 'stroke="#a00000" stroke-width="2"');
  text(1713, 511, '8.11', '#c0c0d8', 18);
  rect(1713, 1260, 47, 22, 'none', 'stroke="#a00000" stroke-width="1.5"');
  text(1714, 1278, 'X100', '#b82020', 18);

  /* ---- time axis ---- */
  [211, 481, 970, 1251, 1457].forEach(function (x) { hv(x, 1283, x, 1306, DR, 1.5); });
  [346, 413, 756, 829, 899, 1039, 1111, 1181, 1302, 1355].forEach(function (x) { hv(x, 1283, x, 1287, DR, 1.5); });
  text(8, 1302, '2022年', '#d82020', 18);
  text(214, 1302, '9', '#d82020', 18);
  text(484, 1302, '10', '#d82020', 18);
  text(973, 1302, '12', '#d82020', 18);
  text(1254, 1302, '1', '#d82020', 18);
  text(1460, 1302, '2', '#d82020', 18);
  rect(623, 1283, 117, 23, '#00008c');
  text(625, 1302, '2022/10/25/二', '#c0c0d0', 18);
  text(1728, 1302, '日线', '#c0c0c0', 18);

  svg.innerHTML = out.join('');
})();
```
